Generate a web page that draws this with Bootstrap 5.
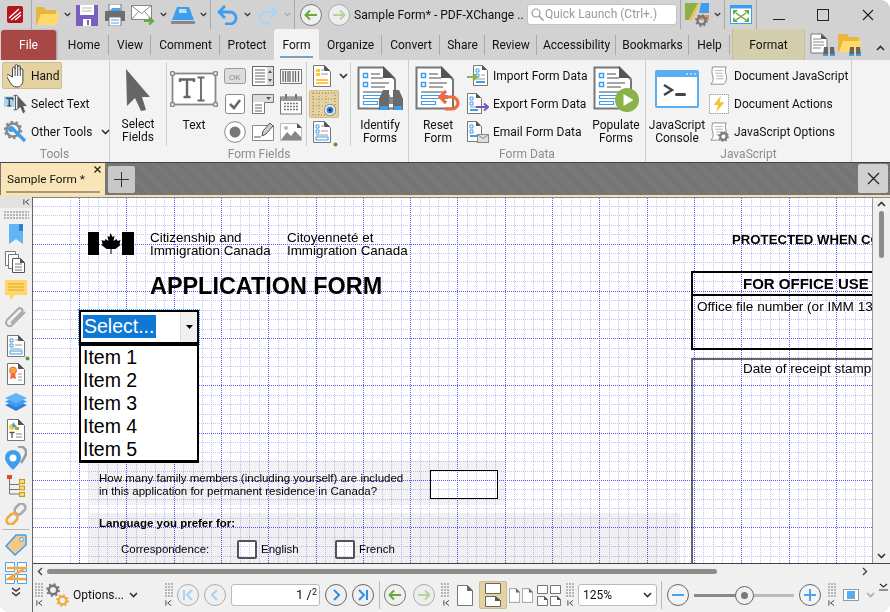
<!DOCTYPE html>
<html lang="en"><head><meta charset="utf-8"><title>Sample Form</title>
<link href="https://cdn.jsdelivr.net/npm/bootstrap@5.3.0/dist/css/bootstrap.min.css" rel="stylesheet">
<style>
html,body{margin:0;width:890px;height:612px;overflow:hidden;background:#fff}
body{font:12px/13px Roboto,sans-serif;color:#111}
svg{flex:none;display:block}
.win{width:890px;height:612px;background:#d2d2d2;border-radius:0 9px 9px 9px;overflow:hidden}
.titlebar{height:29px}
.vs{width:1px;height:29px;background:#a9a9a9;flex:none}
.ml2{margin-left:2px}.ml3{margin-left:3px}.ml4{margin-left:4px}.ml5{margin-left:5px}.ml6{margin-left:6px}.ml7{margin-left:7px}.ml8{margin-left:8px}.ml13{margin-left:13px}.ml16{margin-left:16px}.ml27{margin-left:27px}.ml32{margin-left:32px}.ml33{margin-left:33px}
.dtitle{width:171px;font-size:12.1px;white-space:nowrap;overflow:hidden;padding-top:1px}
.quick{width:150px;height:21px;background:#fff;border:1px solid #c4c4c4;border-radius:3px;color:#999;padding:0 3px;gap:1px}
.tabs{height:31px;flex-wrap:nowrap;padding-left:1px}
.tabs .nav-link{padding:0;height:31px;color:#111;font-size:12px;line-height:32px;text-align:center;flex:none;background:linear-gradient(#aaa,#aaa) right 6px/1px 20px no-repeat;border-radius:0}
.tabs .t-file{width:55px;margin-right:3px;margin-top:1px;height:30px;line-height:30px;color:#fff;background:#a94646;border-radius:3px 3px 0 0;box-shadow:1px 0 2px #999}
.tabs .t-active{width:45px;background:#f3f3f3;border-radius:3px 3px 0 0;position:relative}
.tabs .t-active::after{content:"";position:absolute;left:6px;right:6px;bottom:2px;height:2px;background:#7ba0bd}
.tabs .t-plain{background:none}
.tabs .t-format{width:73px;margin-left:2px;background:#d3ceae;border-left:1px solid #c9bf8e;border-right:1px solid #c9bf8e}
.w50{width:50px}.w42{width:42px}.w69{width:69px}.w54{width:54px}.w63{width:63px}.w58{width:58px}.w45{width:45px}.w52{width:52px}.w79{width:79px}.w73{width:73px}.w41{width:41px}
.ribbon{height:103px;background:#f3f3f3;border-bottom:1px solid #444}
.group{border-right:1px solid #cfcfcf;height:102px}
.g-tools{width:110px}.g-fields{width:299px}.g-data{width:237px}.g-js{width:206px}
.cols{height:88px}
.glabel{height:14px;line-height:13px;text-align:center;color:#8c8c8c}
.sm{height:28px;display:flex;align-items:center;white-space:nowrap}
.sm>span{padding-top:1px}
.hand{height:27px;width:60px;margin:0 0 1px 2px;background:#e4d2a0;border:1px solid #cdbc8c;border-radius:2px;padding:0 0 0 4px}
.tools{padding:2px 0 0 0}
.toolrow{padding-left:4px;gap:4px}
.lg{display:flex;flex-direction:column;align-items:center;text-align:center;flex:none;height:88px}
.lg>span{margin-top:1px}
.lgicon{height:58px;display:flex;align-items:center;justify-content:center}
.isep{border-right:1px solid #cfcfcf;height:84px;margin-top:2px;flex:none}
.isep.lg .lgicon{height:55px}
.l-sel{width:57px}.l-text{width:54px}.l-id{width:58px}.l-pop{width:52px}.l-con{width:62px}
.sgrid{display:grid;grid-template-columns:repeat(3,28px);grid-auto-rows:28px;place-items:center;padding-top:0;width:86px;height:84px}
.c44{width:44px}
.c44 .sm{justify-content:center;width:30px;position:relative}
.tan{width:28px;height:28px;background:#e4d2a0;border:1px solid #cdbc8c;border-radius:2px;margin-left:2px}
.chevx{position:absolute;left:32px;top:11px}
.dot2{position:absolute;left:26px;top:24px}
.dot1{position:absolute;right:2px;top:24px}
.rows{padding-top:2px;width:123px}
.rows .sm{gap:4px}
.rows2{padding-top:2px;padding-left:1px}
.rows2 .sm{gap:5px}
.doctabs{height:32px;background:#767676;background-image:repeating-linear-gradient(45deg,#7c7c7c 0 1px,#717171 1px 2px)}
.dtab{width:104px;margin-left:1px;background:#f9e5b8;position:relative;padding:10px 0 0 6px;white-space:nowrap;font-size:11.8px}
.dtab::after{content:"";position:absolute;left:5px;right:5px;bottom:2px;height:2px;background:#a89a7a}
.dx{position:absolute;right:4px;top:3px}
.plus{width:27px;height:27px;margin:3px 0 0 3px;background:#c8c8c8;border-radius:2px}
.closeb{width:30px;height:29px;margin:1px 2px 0 auto;background:#d0d0d0;border-radius:2px}
.lower{height:417px;border-top:2px solid #f3e0b6;background:#f0f0f0}
.side{width:33px;height:415px;border-right:1px solid #666;background:#f0f0f0;position:relative}
.side-col{width:32px;align-items:center}
.sidetop{height:11px;align-self:stretch;background:#e2e2e2;display:flex;justify-content:flex-end;padding:1px 2px 0 0}
.s28{height:28px;display:flex;align-items:center;justify-content:center;position:relative;width:32px;flex:none}
.grip{width:25px;height:8px;margin:3px 0 1px;background-image:radial-gradient(circle at 1px 1px,#b5b5b5 1px,transparent 1px);background-size:3px 3px}
.sepline{height:1px;width:28px;background:#bbb;margin:1px 0;flex:none}
.pagewrap{height:367px;width:857px;border-top:1px solid #888;border-bottom:1px solid #444}
.page{width:840px;height:365px;background:#fff;position:relative;overflow:hidden;font-family:"Liberation Sans",Arial,sans-serif;color:#000;border-right:1px solid #999}
.gridov{position:absolute;left:0;top:0;mix-blend-mode:multiply;z-index:2;pointer-events:none}
.vbar{width:17px;height:365px;background:#f0f0f0;padding-top:3px;align-items:center}
.vthumb{width:5px;height:47px;background:#8c8c8c;border-radius:3px;margin-top:4px}
.pl{width:658px;flex:none}
.pr{width:182px;flex:none}
.logo{margin:34px 0 0 55px;height:26px}
.cit{font-size:13.4px;line-height:13px;white-space:nowrap;margin-top:-1px}
.cit1{margin-left:16px;width:137px}
.h-app{font-weight:700;font-size:23.4px;line-height:28px;margin:14px 0 0 117px;white-space:nowrap}
.combo{width:120px;height:34px;margin:10px 0 0 46px;background:#fff;border:2px solid #000;outline:1px dotted #39f;padding:3px 0 0 2px;position:relative;z-index:3;font-size:19.5px;line-height:23px}
.sel{display:inline-block;width:73px;background:#0f78d4;color:#fff;padding-left:1px;height:23px;white-space:nowrap}
.cbtn{position:absolute;right:0;top:0;width:17px;height:30px;background:#f0f0f0;border-left:1px solid #ddd;display:flex;align-items:center;justify-content:center}
.items{width:120px;margin-left:46px;border:2px solid #000;border-width:2px 2px 3px 2px;position:relative;z-index:3;background:#fff;border-radius:0;height:119px}
.items .list-group-item{border:0;padding:0 0 0 2px;font-size:19.5px;line-height:23px;height:23px;color:#000;background:none}
.fam{margin:-2px 0 0 56px;width:416px;height:44px;background:#f2f2f2;padding:11px 0 0 10px;font-size:11.5px;line-height:13px;white-space:nowrap;justify-content:space-between}
.fambox{width:68px;height:29px;background:#fff;border:1px solid #000;margin:-2px 7px 0 0}
.lang{margin:8px 0 0 56px;width:591px;height:60px;background:#f0f0f0;padding:4px 0 0 10px;font-size:11.5px;line-height:13px;white-space:nowrap}
.lang b{display:block}
.chkrow{margin:10px 0 0 22px;align-items:center}
.chk.form-check-input{width:20px;height:19px;margin:0;border:2px solid #555;border-radius:2px;background:#fff}
.corr{width:116px}
.chk.fr{margin-left:37px}
.pt4{margin-left:4px}
.w37{width:37px}
.prot{font-weight:700;font-size:13.2px;line-height:14px;margin:35px 0 0 41px;white-space:nowrap}
.office{margin-top:24px;height:79px;border:2px solid #000;border-right:0;width:182px;overflow:hidden}
.ofh{height:23px;border-bottom:2px solid #000;font-weight:700;font-size:15px;line-height:22px;padding-left:50px;white-space:nowrap}
.ofb{font-size:13.6px;line-height:16px;padding:3px 0 0 4px;white-space:nowrap}
.recv{margin-top:8px;height:220px;border:2px solid #666;border-right:0;border-bottom:0;font-size:13.5px;line-height:16px;padding:1px 0 0 50px;white-space:nowrap;overflow:hidden}
.hs{height:15px;background:#f0f0f0;padding-left:4px;width:857px}
.hthumb{width:670px;height:5px;background:#8c8c8c;border-radius:3px;margin-left:4px}
.hsr{margin-left:145px}
.status{height:32px;width:857px;background:#f0f0f0;position:relative}
.gripb{width:8px;height:15px;background-image:radial-gradient(circle at 1px 1px,#b5b5b5 1px,transparent 1px);background-size:3px 3px;margin-top:-10px;flex:none}
.pgin{width:89px;height:22px;background:#fff;border:1px solid #bbb;border-radius:3px;text-align:right;padding:3px 2px 0 0;font-size:13px;flex:none}
.pgin sup{font-size:9px;top:-4px}
.seltan{width:28px;height:28px;background:#e4d2a0;border:1px solid #cdbc8c;border-radius:2px;flex:none}
.zoomsel{width:79px;height:22px;background:#fff;border:1px solid #bbb;border-radius:3px;padding:3px 4px;justify-content:space-between;flex:none}
.vsb{width:1px;height:28px;background:#bbb;flex:none}
.slider{width:100px;height:3px;background:linear-gradient(90deg,#888 43%,#bbb 43%);position:relative;flex:none}
.thumb{position:absolute;left:41px;top:-8px}
.k{position:absolute;top:20px}
.k1{left:3px}.k2{left:132px}.k3{left:410px}.k4{left:534px}.k5{left:795px}
.optx{width:51px;flex:none;white-space:nowrap;padding-top:1px}
</style></head><body>
<svg width="0" height="0" class="position-absolute"><defs>
<symbol id="chev" viewBox="0 0 9 6"><path d="M1 1l3.500 3.500L8 1" fill="none" stroke="#333" stroke-width="1.600"/></symbol>
<symbol id="chevg" viewBox="0 0 9 6"><path d="M1 1l3.500 3.500L8 1" fill="none" stroke="#aaa" stroke-width="1.600"/></symbol>
<symbol id="k" viewBox="0 0 8 8"><path d="M1 1v6" stroke="#333"/><path d="M7 1L3 4l4 3" fill="none" stroke="#333"/></symbol>
<symbol id="app" viewBox="0 0 16 17"><rect width="16" height="17" rx="2" fill="#b3171b"/><path d="M2 12L12 3M4 14L14 6M8 14l6-5" stroke="#fff" stroke-width="1.300"/></symbol>
<symbol id="folder" viewBox="0 0 24 20"><path d="M0 2h8l2 3h10v4H5L1 20H0z" fill="#e9b53c"/><path d="M5 9h19l-4 11H1z" fill="#ffd96a"/></symbol>
<symbol id="save" viewBox="0 0 22 22"><path d="M0 1h22v21H0z" fill="#7b5fc0"/><path d="M4 1h14v10H4z" fill="#fff"/><path d="M6 4h10M6 7h10" stroke="#bbb"/><path d="M7 15h8v7H7z" fill="#fff"/><path d="M11 16h2v5h-2z" fill="#7b5fc0"/></symbol>
<symbol id="print" viewBox="0 0 22 22"><path d="M5 0h12v7H5z" fill="#fff" stroke="#777"/><path d="M1 7h20v10H1z" fill="#6e6e6e"/><path d="M6 7h12l-2-3H8z" fill="#4aa3ee"/><path d="M5 13h12v9H5z" fill="#fff" stroke="#777"/><path d="M7 16h8M7 19h8" stroke="#4aa3ee"/></symbol>
<symbol id="mail" viewBox="0 0 24 20"><path d="M.5.500h20v14H.5z" fill="#fff" stroke="#888"/><path d="M.5.500l10 8 10-8M.5 14.500l7-8M20.500 14.500l-7-8" fill="none" stroke="#888"/><path d="M13 16h8M18 12.500l4 3.500-4 3.500" fill="none" stroke="#6aa83c" stroke-width="2.200"/></symbol>
<symbol id="stamp" viewBox="0 0 24 18"><path d="M6 1h12l5 13H1z" fill="#3d9dee"/><path d="M8 3h7l1 4H8z" fill="#b7defb"/><path d="M0 15h24v3H0z" fill="#888"/></symbol>
<symbol id="undo" viewBox="0 0 21 20"><path d="M8 1L2 7l6 6M2 7h11a6 6 0 0 1 0 12H8" fill="none" stroke="#3d9dee" stroke-width="2.800"/></symbol>
<symbol id="redo" viewBox="0 0 21 20"><path d="M13 1l6 6-6 6M19 7H8a6 6 0 0 0 0 12h5" fill="none" stroke="#abd5f5" stroke-width="2.800"/></symbol>
<symbol id="back" viewBox="0 0 22 22"><circle cx="11" cy="11" r="10.500" fill="#f0f0f0" stroke="#777"/><path d="M17 11H6M10 6.500L5.500 11l4.500 4.500" fill="none" stroke="#6aa83c" stroke-width="2"/></symbol>
<symbol id="fwd" viewBox="0 0 22 22"><circle cx="11" cy="11" r="10.500" fill="#eee" stroke="#aaa"/><path d="M5 11h11M12 6.500l4.500 4.500-4.500 4.500" fill="none" stroke="#b5d39b" stroke-width="2"/></symbol>
<symbol id="search" viewBox="0 0 13 13"><circle cx="5" cy="5" r="4" fill="none" stroke="#999" stroke-width="1.200"/><path d="M8 8l4.500 4.500" stroke="#999" stroke-width="1.500"/></symbol>
<symbol id="gear" viewBox="0 0 14 14"><circle cx="7" cy="7" r="4.200" fill="none" stroke="#777" stroke-width="2.500"/><circle cx="7" cy="7" r="5.800" fill="none" stroke="#777" stroke-width="2.200" stroke-dasharray="2 2.550"/></symbol>
<symbol id="gearo" viewBox="0 0 14 14"><circle cx="7" cy="7" r="4.200" fill="none" stroke="#f3a73d" stroke-width="2.500"/><circle cx="7" cy="7" r="5.800" fill="none" stroke="#f3a73d" stroke-width="2.200" stroke-dasharray="2 2.550"/></symbol>
<symbol id="theme" viewBox="0 0 24 24"><path d="M0 0h13L4 17H0z" fill="#8ab24a"/><path d="M13 0h2L7 17H4z" fill="#f2c342"/><path d="M16 0h8v10h-8l-2 0z" fill="#3d9dee"/><path d="M12 12h12v5H12z" fill="#e58f5b"/><use href="#gear" x="10" y="11" width="13" height="13"/></symbol>
<symbol id="full" viewBox="0 0 22 19"><rect x=".5" y=".5" width="21" height="18" fill="#fff" stroke="#3d9dee"/><rect x=".5" y=".5" width="21" height="3" fill="#3d9dee"/><path d="M3 5h5L3 10zM19 5v5l-5-5zM3 17v-5l5 5zM19 17h-5l5-5z" fill="#6aa83c"/><path d="M6 8l10 7M16 8L6 15" stroke="#6aa83c" stroke-width="1.500"/></symbol>
<symbol id="docfind" viewBox="0 0 26 24"><path d="M1 1h11l5 5v14H1z" fill="#fff" stroke="#777"/><path d="M3 6h8M3 9h11M3 12h11M3 15h8" stroke="#888"/><path d="M11 1l6 5h-6z" fill="#555"/><path d="M14 14h4v9h-5zM20 14h4l1 9h-5z" fill="#666"/><path d="M13 21h5v2h-5zM20 21h5v2h-5z" fill="#3d9dee"/></symbol>
<symbol id="folderfind" viewBox="0 0 25 24"><path d="M0 1h9l2 3h10v4H5L1 19H0z" fill="#e9b53c"/><path d="M5 8h19l-4 11H1z" fill="#ffd96a"/><path d="M12 14h4v9h-5zM18 14h4l1 9h-5z" fill="#666"/><path d="M11 21h5v2h-5zM18 21h5v2h-5z" fill="#3d9dee"/></symbol>
<symbol id="hand" viewBox="0 0 20 25"><path d="M5.500 14V5.500a1.300 1.300 0 0 1 2.600 0V3a1.300 1.300 0 0 1 2.600 0v1a1.300 1.300 0 0 1 2.600 0v3a1.300 1.300 0 0 1 2.600 0v10c0 4-2 7-6 7s-5-2-7-5l-3-5c-1-2 1-3 2-2z" fill="#fff" stroke="#444"/><path d="M8.100 5v8M10.700 3v10M13.300 4v9" stroke="#444"/></symbol>
<symbol id="seltext" viewBox="0 0 24 22"><rect x="0" y="3" width="11" height="11" fill="#a6d4f7"/><path d="M2 5h7v2M5.500 5v8M3.500 13h4" fill="none" stroke="#444" stroke-width="1.400"/><path d="M12 2v15M10 2h4M10 17h4" stroke="#555"/><path d="M14 2l10 11-4 0 2 6-2 2-3-7-3 3z" fill="#5c5c5c"/></symbol>
<symbol id="tools" viewBox="0 0 23 23"><circle cx="9" cy="9" r="6.500" fill="none" stroke="#888" stroke-width="2.500"/><circle cx="9" cy="9" r="8.300" fill="none" stroke="#888" stroke-width="2" stroke-dasharray="2.500 2.700"/><path d="M8 7l13 13" stroke="#3d9dee" stroke-width="3.200"/><circle cx="7" cy="8" r="3" fill="#3d9dee"/></symbol>
<symbol id="cursor" viewBox="0 0 26 42"><path d="M1 0l24 28-8 0 4 13-5 1-6-13-8 8z" fill="#666"/></symbol>
<symbol id="bigtext" viewBox="0 0 48 36"><rect x="2.500" y="2.500" width="43" height="31" fill="#fff" stroke="#888" stroke-width="1.800"/><g fill="#fff" stroke="#888" stroke-width="1.500"><circle cx="2.500" cy="2.500" r="2"/><circle cx="45.500" cy="2.500" r="2"/><circle cx="2.500" cy="33.500" r="2"/><circle cx="45.500" cy="33.500" r="2"/></g><path d="M10 11V8.500h14V11M17 8.500V26M13.500 26h7" fill="none" stroke="#666" stroke-width="2.400"/><path d="M31 6.500v23M27.500 6.500h7M27.500 29.500h7" stroke="#666" stroke-width="1.800"/></symbol>
<symbol id="okb" viewBox="0 0 22 16"><rect x=".5" y=".5" width="21" height="15" rx="2" fill="#ddd" stroke="#999"/></symbol>
<symbol id="chk" viewBox="0 0 20 20"><rect x=".5" y=".5" width="19" height="19" rx="2" fill="#fff" stroke="#888"/><path d="M5 10l4 4 6-8" fill="none" stroke="#666" stroke-width="2.500"/></symbol>
<symbol id="radio" viewBox="0 0 22 22"><circle cx="11" cy="11" r="10.300" fill="#fff" stroke="#888"/><circle cx="11" cy="11" r="5.500" fill="#777"/></symbol>
<symbol id="spin" viewBox="0 0 22 20"><rect x=".5" y=".5" width="21" height="19" fill="#fff" stroke="#666"/><path d="M3 4h10M3 7h10M3 10h10M3 13h10M3 16h10" stroke="#666"/><rect x="15" y="1" width="6" height="18" fill="#ddd"/><path d="M18 4l-2 3h4zM18 16l-2-3h4z" fill="#555"/></symbol>
<symbol id="barcode" viewBox="0 0 22 15"><rect x=".5" y=".5" width="21" height="14" fill="#fff" stroke="#777"/><path d="M3 2v11M5.500 2v11M8 2v11M10 2v11M13 2v11M15.500 2v11M18.500 2v11" stroke="#666" stroke-width="1.300"/></symbol>
<symbol id="combo" viewBox="0 0 22 20"><path d="M.5.500h21v8h-9v11h-12z" fill="#fff" stroke="#777"/><rect x="1" y="1" width="20" height="7" fill="#ddd"/><path d="M14 3h5l-2.500 3z" fill="#555"/><path d="M3 11h7M3 14h7M3 17h7" stroke="#666"/></symbol>
<symbol id="cal" viewBox="0 0 22 21"><rect x=".5" y="3" width="21" height="17" fill="#fff" stroke="#777"/><rect x="1" y="3" width="20" height="4" fill="#999"/><path d="M6 0v5M16 0v5" stroke="#777" stroke-width="2"/><path d="M4 9.500h14M4 12.500h14M4 15.500h14" stroke="#777" stroke-width="1.600" stroke-dasharray="2 1"/></symbol>
<symbol id="sig" viewBox="0 0 22 20"><path d="M.5 3.500h21v15H.5z" fill="#fff" stroke="#888"/><path d="M2 15h7" stroke="#555"/><path d="M10 14l1-5 7-8 3 3-7 8z" fill="#ccc" stroke="#555"/></symbol>
<symbol id="img" viewBox="0 0 22 18"><path d="M.5.500h17l4 4v13H.5z" fill="#fff" stroke="#bbb"/><path d="M1 17l6-8 4 4 4-5 6 6v3z" fill="#888"/><circle cx="6" cy="5" r="2" fill="#bbb"/><path d="M17 0l5 5h-5z" fill="#555"/></symbol>
<symbol id="docy" viewBox="0 0 18 22"><path d="M.5.500h11l6 6v15H.5z" fill="#fff" stroke="#777"/><path d="M11 0l6 6h-6z" fill="#555"/><path d="M3 4h4v3H3zM3 8h4v3H3z" fill="#ffc83d"/><path d="M8 5h4M8 9h7" stroke="#999"/><rect x="3" y="14" width="12" height="2" fill="#ffc83d"/><rect x="3" y="17" width="12" height="2" fill="#ffc83d"/></symbol>
<symbol id="docb" viewBox="0 0 18 22"><path d="M.5.500h11l6 6v15H.5z" fill="#fff" stroke="#777"/><path d="M11 0l6 6h-6z" fill="#555"/><path d="M3 4h3v3H3zM3 9h3v3H3z" fill="#fff" stroke="#3d9dee"/><path d="M8 5h4M8 10h7M3 14h12" stroke="#999"/><rect x="3" y="16" width="12" height="3" fill="#fff" stroke="#3d9dee"/></symbol>
<symbol id="griddoc" viewBox="0 0 24 24"><path d="M1 1h22v22H1z" fill="none" stroke="#8a7a52" stroke-dasharray="1 2"/><path d="M7 1v22M14 1v22M1 7h22M1 14h22" stroke="#a2915f" stroke-dasharray="1 2"/><circle cx="18" cy="18" r="5.500" fill="#fff" stroke="#888"/><circle cx="18" cy="18" r="3.500" fill="#2f7fd0"/><circle cx="18" cy="18" r="1.300" fill="#222"/></symbol>
<symbol id="bigdoc" viewBox="0 0 46 46"><path d="M1.500 1.500H26l12 12v29H1.500z" fill="#fff" stroke="#777" stroke-width="2"/><path d="M26 0l12 12H26z" fill="#555"/><path d="M6.500 7.500h4v4h-4zM6.500 16.500h4v4h-4z" fill="#fff" stroke="#3d9dee" stroke-width="1.500"/><path d="M14 8h9M14 12h12M14 17h18M14 21h14M6 26h22" stroke="#888" stroke-width="1.300"/><path d="M6.500 29.500h26v3h-26zM6.500 35.500h14v3h-14z" fill="#fff" stroke="#3d9dee" stroke-width="1.200"/></symbol>
<symbol id="binoc" viewBox="0 0 24 24"><path d="M4 2h6v20H0V11zM14 2h6l4 9v11H14z" fill="#6a6a6a"/><path d="M10 9h4v7h-4z" fill="#888"/><path d="M1 18h8v4H1zM15 18h8v4h-8z" fill="#3d9dee"/></symbol>
<symbol id="rarrow" viewBox="0 0 24 24"><path d="M9 3L3 9l6 6M3 9h12a6 6 0 0 1 0 12H8" fill="none" stroke="#f06a3c" stroke-width="3.200"/></symbol>
<symbol id="play" viewBox="0 0 24 24"><circle cx="12" cy="12" r="12" fill="#8ab24a"/><path d="M8.500 6l10 6-10 6z" fill="#fff"/></symbol>
<symbol id="imp" viewBox="0 0 22 22"><path d="M6.500.500h9l5 5v15h-14z" fill="#fff" stroke="#777"/><path d="M15 0l5 5h-5z" fill="#555"/><path d="M9 4h3v3H9zM9 9h3v3H9z" fill="#fff" stroke="#3d9dee"/><path d="M14 10h4M9 14h9" stroke="#999"/><rect x="9" y="16" width="9" height="2" fill="#3d9dee"/><path d="M0 12h9M6 8.500l4 3.500-4 3.500" fill="none" stroke="#8ab24a" stroke-width="2"/></symbol>
<symbol id="exp" viewBox="0 0 22 22"><path d="M.5.500h9l5 5v15H.5z" fill="#fff" stroke="#777"/><path d="M9 0l5 5H9z" fill="#555"/><path d="M3 4h3v3H3zM3 9h3v3H3z" fill="#fff" stroke="#3d9dee"/><path d="M3 14h6" stroke="#999"/><rect x="3" y="16" width="8" height="2" fill="#3d9dee"/><path d="M9 14h11M17 10.500l4 3.500-4 3.500" fill="none" stroke="#7a55c0" stroke-width="2"/></symbol>
<symbol id="eml" viewBox="0 0 22 22"><path d="M.5.500h9l5 5v15H.5z" fill="#fff" stroke="#777"/><path d="M9 0l5 5H9z" fill="#555"/><path d="M3 4h3v3H3zM3 9h3v3H3z" fill="#fff" stroke="#3d9dee"/><rect x="3" y="14" width="8" height="2" fill="#3d9dee"/><rect x="10.500" y="13.500" width="11" height="8" fill="#ddd" stroke="#888"/><path d="M10.500 13.500l5.500 4 5.500-4" fill="none" stroke="#888"/></symbol>
<symbol id="con" viewBox="0 0 44 38"><rect x="1" y="1" width="42" height="36" rx="1" fill="#fff" stroke="#5aaef0" stroke-width="2"/><rect x="1" y="1" width="42" height="6" fill="#5aaef0"/><path d="M31 4h2M35 4h2M39 4h2" stroke="#fff"/><path d="M9 15l8 5-8 5" fill="none" stroke="#444" stroke-width="2.400"/><rect x="20" y="23" width="11" height="3" rx="1.500" fill="#444"/></symbol>
<symbol id="scroll" viewBox="0 0 22 22"><path d="M4 1h15c-2 3-1 6 0 9s0 8-3 10H2c3-3 3-6 2-9S3 4 4 1z" fill="#fff" stroke="#888"/><path d="M7 5h8M7 8h8M8 11h8M8 14h8" stroke="#aaa"/></symbol>
<symbol id="docact" viewBox="0 0 22 22"><rect x=".5" y=".5" width="21" height="21" fill="#fff" stroke="#777" stroke-dasharray="1 1"/><path d="M13 2L5 12h5l-2 8 9-11h-5z" fill="#f5c33b"/></symbol>
<symbol id="jsopt" viewBox="0 0 22 22"><use href="#scroll"/><use href="#gear" x="10" y="10" width="12" height="12"/></symbol>
<symbol id="bm" viewBox="0 0 14 20"><path d="M0 0h14v20l-7-5-7 5z" fill="#63b4f5"/><path d="M10 0h4v7h-4z" fill="#2f7fd0"/></symbol>
<symbol id="pages" viewBox="0 0 22 22"><path d="M.5.500h10v14H.5z" fill="#fff" stroke="#777"/><path d="M3.500 3.500h10v14h-10z" fill="#fff" stroke="#777"/><path d="M7.500 7.500h8l4 4v10h-12z" fill="#fff" stroke="#555"/><path d="M15 7l5 5h-5z" fill="#555"/><path d="M10 13h7M10 16h7M10 19h7" stroke="#777"/></symbol>
<symbol id="note" viewBox="0 0 22 21"><path d="M1 0h20a1 1 0 0 1 1 1v13a1 1 0 0 1-1 1H10l-5 6v-6H1a1 1 0 0 1-1-1V1a1 1 0 0 1 1-1z" fill="#ffd768"/><path d="M3 4h16M3 7h16M3 10h16" stroke="#e0a52d"/></symbol>
<symbol id="clip" viewBox="0 0 24 24"><path d="M21 6L8 19c-3 3-8-1-5-5L14 3c2-2 6 0 4 3L7 17" fill="none" stroke="#aaa" stroke-width="2"/></symbol>
<symbol id="cert" viewBox="0 0 18 22"><path d="M.5.500h11l6 6v15H.5z" fill="#fff" stroke="#777"/><path d="M11 0l6 6h-6z" fill="#555"/><path d="M4 10l-1 6 3-1 3 1-1-6z" fill="#f06a3c"/><circle cx="6" cy="7.500" r="3.500" fill="#f3a73d" stroke="#f06a3c"/><path d="M11 11h4M11 14h4M11 17h4" stroke="#999"/></symbol>
<symbol id="layers" viewBox="0 0 22 18"><path d="M11 8L22 12l-11 6L0 12z" fill="#2f7fd0"/><path d="M11 4l11 4.500-11 6L0 8.500z" fill="#3d9dee"/><path d="M11 0l11 5-11 5.500L0 5z" fill="#63b4f5"/></symbol>
<symbol id="docs" viewBox="0 0 18 22"><path d="M.5.500h11l6 6v15H.5z" fill="#fff" stroke="#777"/><path d="M11 0l6 6h-6z" fill="#555"/><circle cx="5" cy="8" r="3" fill="#ffc83d"/><path d="M6 3l4 5H5z" fill="#3d9dee"/><path d="M8 8h4v3H8z" fill="#8ab24a"/><path d="M2.500 13.500h5M5 13.500V19" stroke="#555" stroke-width="1.300"/><path d="M9 15h6M9 18h6" stroke="#888"/></symbol>
<symbol id="loc" viewBox="0 0 22 24"><path d="M13 1c4-2 9 2 8 7-1 3-3 6-5 9" fill="none" stroke="#999" stroke-width="2.500"/><path d="M8 4a8 8 0 0 1 8 8c0 4-5 9-8 12-3-3-8-8-8-12a8 8 0 0 1 8-8z" fill="#3d9dee"/><circle cx="8" cy="12" r="3.500" fill="#fff"/></symbol>
<symbol id="tree" viewBox="0 0 18 22"><rect width="5" height="4" fill="#e04c30"/><path d="M2.500 4v15h10M2.500 9.500h10M2.500 14.500h10" fill="none" stroke="#777"/><g fill="#ffd768" stroke="#c09a20"><rect x="12.500" y="4.500" width="5" height="4"/><rect x="12.500" y="11" width="5" height="4"/><rect x="12.500" y="17.500" width="5" height="4"/></g></symbol>
<symbol id="link" viewBox="0 0 22 22"><rect x="9" y="2" width="12" height="8" rx="4" transform="rotate(-45 15 6)" fill="none" stroke="#aaa" stroke-width="2.600"/><rect x="1" y="12" width="12" height="8" rx="4" transform="rotate(-45 7 16)" fill="none" stroke="#f3a73d" stroke-width="2.600"/></symbol>
<symbol id="tag" viewBox="0 0 22 22"><path d="M11 1h9a1 1 0 0 1 1 1v9L10 21 1 12z" fill="#f5c88a" stroke="#3d9dee" stroke-width="1.500"/><circle cx="16.500" cy="5.500" r="1.800" fill="#fff" stroke="#3d9dee"/></symbol>
<symbol id="zz" viewBox="0 0 22 22"><path d="M.5.500h9v9h-9zM12.500.500h9v9h-9zM.5 12.500h9v9h-9zM12.500 12.500h9v9h-9z" fill="#fff" stroke="#4aa3ee"/><path d="M2 6h18L3 17h18" fill="none" stroke="#f3a73d" stroke-width="2.400"/></symbol>
<symbol id="dchev" viewBox="0 0 10 10"><path d="M1 1l4 3 4-3M1 5.500l4 3 4-3" fill="none" stroke="#333" stroke-width="1.400"/></symbol>
<symbol id="pfirst" viewBox="0 0 22 22"><circle cx="11" cy="11" r="10.500" fill="#f0f0f0" stroke="#aaa"/><path d="M7 6v10M15 6l-5 5 5 5" fill="none" stroke="#a9d3f3" stroke-width="2"/></symbol>
<symbol id="pprev" viewBox="0 0 22 22"><circle cx="11" cy="11" r="10.500" fill="#f0f0f0" stroke="#aaa"/><path d="M13 6l-5 5 5 5" fill="none" stroke="#a9d3f3" stroke-width="2"/></symbol>
<symbol id="pnext" viewBox="0 0 22 22"><circle cx="11" cy="11" r="10.500" fill="#f0f0f0" stroke="#666"/><path d="M9 6l5 5-5 5" fill="none" stroke="#2f8fe6" stroke-width="2"/></symbol>
<symbol id="plast" viewBox="0 0 22 22"><circle cx="11" cy="11" r="10.500" fill="#f0f0f0" stroke="#666"/><path d="M7 6l5 5-5 5M15 6v10" fill="none" stroke="#2f8fe6" stroke-width="2"/></symbol>
<symbol id="pg1" viewBox="0 0 16 21"><path d="M.5.500h10l5 5v15H.5z" fill="#fff" stroke="#777"/><path d="M10 0l6 6h-6z" fill="#666"/></symbol>
<symbol id="pgc" viewBox="0 0 16 24"><path d="M.5.500h15v10H.5z" fill="#fff" stroke="#666"/><path d="M.5 13.500h10l5 4v6H.5z" fill="#fff" stroke="#666"/><path d="M10 13l6 5h-6z" fill="#555"/></symbol>
<symbol id="pg2" viewBox="0 0 24 15"><use href="#pg1" width="11" height="15"/><use href="#pg1" x="13" width="11" height="15"/></symbol>
<symbol id="pg4" viewBox="0 0 24 21"><path d="M.5.500h10v8H.5zM13.500.500h10v8h-10z" fill="#fff" stroke="#777"/><path d="M.5 11.500h7l3 3v6H.5zM13.500 11.500h7l3 3v6h-10z" fill="#fff" stroke="#777"/><path d="M7 11l4 4H7zM20 11l4 4h-4z" fill="#555"/></symbol>
<symbol id="zm" viewBox="0 0 22 22"><circle cx="11" cy="11" r="10.500" fill="#f4f4f4" stroke="#666"/><path d="M5 11h12" stroke="#4aa3ee" stroke-width="2"/></symbol>
<symbol id="zp" viewBox="0 0 22 22"><circle cx="11" cy="11" r="10.500" fill="#f4f4f4" stroke="#666"/><path d="M5 11h12M11 5v12" stroke="#4aa3ee" stroke-width="2"/></symbol>
<symbol id="thumb" viewBox="0 0 19 19"><circle cx="9.500" cy="9.500" r="9" fill="#f0f0f0" stroke="#666"/><circle cx="9.500" cy="9.500" r="3.500" fill="#777"/></symbol>
<symbol id="fit" viewBox="0 0 16 12"><rect x=".5" y=".5" width="15" height="11" fill="#fff" stroke="#999"/><rect x="4" y="2" width="8" height="8" fill="#5aaef0"/></symbol>
</defs></svg>

<div class="win d-flex flex-column">
 <div class="titlebar d-flex align-items-center">
  <svg class="ml7" width="16" height="17"><use href="#app"/></svg><span class="vs ml8"></span>
  <svg class="ml4" width="24" height="20"><use href="#folder"/></svg><svg class="ml4" width="7" height="5"><use href="#chev"/></svg>
  <svg class="ml5" width="22" height="22"><use href="#save"/></svg><svg class="ml6" width="22" height="22"><use href="#print"/></svg>
  <svg class="ml5" width="24" height="20"><use href="#mail"/></svg><svg class="ml5" width="7" height="5"><use href="#chev"/></svg>
  <svg class="ml4" width="24" height="18"><use href="#stamp"/></svg><svg class="ml5" width="7" height="5"><use href="#chev"/></svg><span class="vs ml3"></span>
  <svg class="ml6" width="21" height="20"><use href="#undo"/></svg><svg class="ml6" width="7" height="5"><use href="#chev"/></svg>
  <svg class="ml7" width="20" height="20"><use href="#redo"/></svg><svg class="ml6" width="7" height="5"><use href="#chevg"/></svg><span class="vs ml3"></span>
  <svg class="ml5" width="22" height="22"><use href="#back"/></svg><svg class="ml6" width="22" height="22"><use href="#fwd"/></svg>
  <span class="dtitle ml4">Sample Form* - PDF-XChange ..</span>
  <div class="quick ml2 d-flex align-items-center"><svg width="13" height="13"><use href="#search"/></svg><span>Quick Launch (Ctrl+.)</span></div>
  <span class="vs ml3"></span><svg class="ml4" width="24" height="24"><use href="#theme"/></svg><svg class="ml5" width="7" height="5"><use href="#chev"/></svg><span class="vs ml3"></span>
  <svg class="ml5" width="22" height="19"><use href="#full"/></svg><span class="vs ml4"></span>
  <svg class="ml16" width="12" height="12"><path d="M0 10.500h12" stroke="#222" stroke-width="1.200"/></svg>
  <svg class="ml32" width="12" height="12"><rect x=".5" y=".5" width="11" height="11" fill="none" stroke="#222"/></svg>
  <svg class="ml33" width="12" height="12"><path d="M1 1l10 10M11 1L1 11" stroke="#222" stroke-width="1.100"/></svg>
 </div>

 <nav class="nav tabs align-items-start">
  <a class="nav-link t-file" href="#">File</a>
  <a class="nav-link w50" href="#">Home</a><a class="nav-link w42" href="#">View</a><a class="nav-link w69" href="#">Comment</a><a class="nav-link w54 t-plain" href="#">Protect</a>
  <a class="nav-link t-active" href="#">Form</a>
  <a class="nav-link w63" href="#">Organize</a><a class="nav-link w58" href="#">Convert</a><a class="nav-link w45" href="#">Share</a><a class="nav-link w52" href="#">Review</a><a class="nav-link w79" href="#">Accessibility</a><a class="nav-link w73" href="#">Bookmarks</a><a class="nav-link w41" href="#">Help</a>
  <a class="nav-link t-format" href="#">Format</a>
  <svg class="ml5 mt-1" width="26" height="24"><use href="#docfind"/></svg><svg class="ml2 mt-1" width="25" height="24"><use href="#folderfind"/></svg>
  <svg class="ml13 mt-3" width="9" height="6"><g transform="rotate(180 4.500 3)"><use href="#chev"/></g></svg>
 </nav>

 <div class="ribbon d-flex">
  <section class="group g-tools">
   <div class="cols tools">
    <div class="sm hand gap-1"><svg width="20" height="25"><use href="#hand"/></svg><span>Hand</span></div>
    <div class="sm toolrow"><svg width="23" height="22" viewBox="0 0 24 22"><use href="#seltext"/></svg><span>Select Text</span></div>
    <div class="sm toolrow"><svg width="23" height="23"><use href="#tools"/></svg><span>Other Tools</span><svg class="ml5" width="9" height="6"><use href="#chev"/></svg></div>
   </div>
   <div class="glabel">Tools</div>
  </section>
  <section class="group g-fields">
   <div class="cols d-flex">
    <div class="lg l-sel isep"><div class="lgicon"><svg width="26" height="42"><use href="#cursor"/></svg></div><span>Select<br>Fields</span></div>
    <div class="lg l-text"><div class="lgicon"><svg width="48" height="36"><use href="#bigtext"/></svg></div><span>Text</span></div>
    <div class="sgrid isep">
     <svg width="22" height="16" viewBox="0 0 22 16"><use href="#okb"/><text x="5" y="11.500" font-size="8" fill="#888" font-family="Liberation Sans">OK</text></svg>
     <svg width="22" height="20"><use href="#spin"/></svg><svg width="22" height="15"><use href="#barcode"/></svg>
     <svg width="20" height="20"><use href="#chk"/></svg><svg width="22" height="20"><use href="#combo"/></svg><svg width="22" height="21"><use href="#cal"/></svg>
     <svg width="22" height="22"><use href="#radio"/></svg><svg width="22" height="20"><use href="#sig"/></svg><svg width="22" height="18"><use href="#img"/></svg>
    </div>
    <div class="c44 isep">
     <div class="sm"><svg width="18" height="22"><use href="#docy"/></svg><svg class="chevx" width="9" height="6"><use href="#chev"/></svg></div>
     <div class="sm tan d-flex align-items-center justify-content-center"><svg width="24" height="24"><use href="#griddoc"/></svg></div>
     <div class="sm"><svg width="18" height="22"><use href="#docb"/></svg><svg class="dot2" width="5" height="5"><circle cx="2.500" cy="2.500" r="2" fill="#4f9a2c"/></svg></div>
    </div>
    <div class="lg l-id"><div class="lgicon"><svg width="46" height="46" viewBox="0 0 46 46"><use href="#bigdoc" width="46" height="46"/><use href="#binoc" x="22" y="22" width="24" height="24"/></svg></div><span>Identify<br>Forms</span></div>
   </div>
   <div class="glabel">Form Fields</div>
  </section>
  <section class="group g-data">
   <div class="cols d-flex">
    <div class="lg l-id"><div class="lgicon"><svg width="46" height="46" viewBox="0 0 46 46"><use href="#bigdoc" width="46" height="46"/><use href="#rarrow" x="22" y="22" width="24" height="24"/></svg></div><span>Reset<br>Form</span></div>
    <div class="rows">
     <div class="sm"><svg width="22" height="22"><use href="#imp"/></svg><span>Import Form Data</span></div>
     <div class="sm"><svg width="22" height="22"><use href="#exp"/></svg><span>Export Form Data</span></div>
     <div class="sm"><svg width="22" height="22"><use href="#eml"/></svg><span>Email Form Data</span></div>
    </div>
    <div class="lg l-pop"><div class="lgicon"><svg width="46" height="46" viewBox="0 0 46 46"><use href="#bigdoc" width="46" height="46"/><use href="#play" x="22" y="22" width="24" height="24"/></svg></div><span>Populate<br>Forms</span></div>
   </div>
   <div class="glabel">Form Data</div>
  </section>
  <section class="group g-js">
   <div class="cols d-flex">
    <div class="lg l-con"><div class="lgicon"><svg width="44" height="38"><use href="#con"/></svg></div><span>JavaScript<br>Console</span></div>
    <div class="rows2">
     <div class="sm"><svg width="20" height="22" viewBox="0 0 22 22"><use href="#scroll"/></svg><span>Document JavaScript</span></div>
     <div class="sm"><svg width="20" height="22" viewBox="0 0 22 22"><use href="#docact"/></svg><span>Document Actions</span></div>
     <div class="sm"><svg width="20" height="22" viewBox="0 0 22 22"><use href="#jsopt"/></svg><span>JavaScript Options</span></div>
    </div>
   </div>
   <div class="glabel">JavaScript</div>
  </section>
 </div>

 <div class="doctabs d-flex">
  <div class="dtab">Sample Form *<svg class="dx" width="7" height="7"><path d="M.5.500l6 6M6.500.500l-6 6" stroke="#222" stroke-width="1.300"/></svg></div>
  <div class="plus d-flex align-items-center justify-content-center"><svg width="15" height="15"><path d="M7.500 0v15M0 7.500h15" stroke="#333"/></svg></div>
  <div class="closeb d-flex align-items-center justify-content-center"><svg width="13" height="13"><path d="M1 1l11 11M12 1L1 12" stroke="#222" stroke-width="1.200"/></svg></div>
 </div>

 <div class="lower d-flex">
  <aside class="side">
   <div class="side-col d-flex flex-column">
    <div class="sidetop"><svg width="7" height="8"><use href="#k"/></svg></div>
    <div class="grip"></div>
    <div class="s28"><svg width="14" height="20"><use href="#bm"/></svg></div>
    <div class="s28"><svg width="22" height="22"><use href="#pages"/></svg></div>
    <div class="s28"><svg width="22" height="21"><use href="#note"/></svg></div>
    <div class="s28"><svg width="24" height="24"><use href="#clip"/></svg></div>
    <div class="s28"><svg width="18" height="22"><use href="#docb"/></svg><svg class="dot1" width="5" height="5"><circle cx="2.500" cy="2.500" r="2" fill="#4f9a2c"/></svg></div>
    <div class="s28"><svg width="18" height="22"><use href="#cert"/></svg></div>
    <div class="s28"><svg width="22" height="18"><use href="#layers"/></svg></div>
    <div class="s28"><svg width="18" height="22"><use href="#docs"/></svg></div>
    <div class="s28"><svg width="22" height="24"><use href="#loc"/></svg></div>
    <div class="s28"><svg width="18" height="22"><use href="#tree"/></svg></div>
    <div class="s28"><svg width="22" height="22"><use href="#link"/></svg></div>
    <div class="sepline"></div>
    <div class="s28"><svg width="22" height="22"><use href="#tag"/></svg></div>
    <div class="s28"><svg width="22" height="22"><use href="#zz"/></svg></div>
    <div class="d-flex justify-content-center"><svg width="10" height="10"><use href="#dchev"/></svg></div>
   </div>
  </aside>
  <div class="d-flex flex-column">
   <div class="pagewrap d-flex">
    <main class="page d-flex">
     <svg class="gridov" width="840" height="365" shape-rendering="crispEdges"><path id="gmin" fill="none" stroke="#c4c4ff" stroke-dasharray="1 1"/><path id="gmaj" fill="none" stroke="#5c5cff" stroke-dasharray="1 1"/></svg>
     <div class="pl">
      <div class="logo d-flex">
       <svg width="46" height="23" viewBox="0 0 46 23"><path d="M0 0h11v23H0zM34 0h12v23H34z" fill="#000"/><path d="M22.500 1l2 4 2-1-1 5 3-2 1 2 3-1-1 4 1 1-5 4h-4v5h-1v-5h-4l-5-4 1-1-1-4 3 1 1-2 3 2-1-5 2 1z" fill="#000"/></svg>
       <div class="cit cit1">Citizenship and<br>Immigration Canada</div><div class="cit">Citoyenneté et<br>Immigration Canada</div>
      </div>
      <h1 class="h-app">APPLICATION FORM</h1>
      <div class="combo"><span class="sel">Select...</span><span class="cbtn"><svg width="7" height="4"><path d="M0 0h7L3.500 4z" fill="#000"/></svg></span></div>
      <ul class="list-group items"><li class="list-group-item">Item 1</li><li class="list-group-item">Item 2</li><li class="list-group-item">Item 3</li><li class="list-group-item">Item 4</li><li class="list-group-item">Item 5</li></ul>
      <div class="fam d-flex"><div>How many family members (including yourself) are included<br>in this application for permanent residence in Canada?</div><div class="fambox"></div></div>
      <div class="lang"><b>Language you prefer for:</b>
       <div class="chkrow d-flex"><span class="corr">Correspondence:</span><input class="form-check-input chk" type="checkbox" aria-label="English"><span class="pt4 w37">English</span><input class="form-check-input chk fr" type="checkbox" aria-label="French"><span class="pt4">French</span></div>
      </div>
     </div>
     <div class="pr">
      <div class="prot">PROTECTED WHEN COMPLETED</div>
      <div class="office"><div class="ofh">FOR OFFICE USE ONLY</div><div class="ofb">Office file number (or IMM 1344)</div></div>
      <div class="recv">Date of receipt stamp</div>
     </div>
    </main>
    <div class="vbar d-flex flex-column"><svg width="9" height="6"><g transform="rotate(180 4.500 3)"><use href="#chev"/></g></svg><div class="vthumb"></div><svg class="mt-auto mb-1" width="9" height="6"><use href="#chev"/></svg></div>
   </div>
   <div class="hs d-flex align-items-center"><svg width="6" height="9"><path d="M5 1L1.500 4.500 5 8" fill="none" stroke="#444" stroke-width="1.400"/></svg><div class="hthumb"></div><svg class="hsr" width="6" height="9"><path d="M1 1l3.500 3.500L1 8" fill="none" stroke="#444" stroke-width="1.400"/></svg></div>
   <div class="status d-flex align-items-center">
    <div class="gripb ml2"></div>
    <svg class="ml3" width="24" height="24" viewBox="0 0 24 24"><use href="#gear" width="14" height="14"/><use href="#gearo" x="10" y="11" width="13" height="13"/></svg>
    <span class="ml3 optx">Options...</span><svg class="ml5" width="9" height="6"><use href="#chev"/></svg>
    <div class="gripb ml27"></div>
    <svg class="ml4" width="22" height="22"><use href="#pfirst"/></svg><svg class="ml5" width="22" height="22"><use href="#pprev"/></svg>
    <div class="pgin ml5">1 /<sup>2</sup></div>
    <svg class="ml5" width="22" height="22"><use href="#pnext"/></svg><svg class="ml5" width="22" height="22"><use href="#plast"/></svg>
    <span class="vsb ml5"></span>
    <svg class="ml4" width="22" height="22"><use href="#back"/></svg><svg class="ml7" width="22" height="22"><use href="#fwd"/></svg>
    <div class="gripb ml6"></div>
    <svg class="ml8" width="16" height="21"><use href="#pg1"/></svg>
    <div class="seltan ml6 d-flex align-items-center justify-content-center"><svg width="16" height="24"><use href="#pgc"/></svg></div>
    <svg class="ml2" width="24" height="15"><use href="#pg2"/></svg><svg class="ml4" width="24" height="21"><use href="#pg4"/></svg>
    <div class="gripb ml5"></div>
    <div class="zoomsel ml4 d-flex align-items-center"><span>125%</span><svg width="9" height="6"><use href="#chev"/></svg></div>
    <span class="vsb ml4"></span>
    <svg class="ml5" width="22" height="22"><use href="#zm"/></svg>
    <div class="slider ml5"><svg class="thumb" width="19" height="19"><use href="#thumb"/></svg></div>
    <svg class="ml5" width="22" height="22"><use href="#zp"/></svg>
    <div class="gripb ml7"></div>
    <svg class="ml7" width="16" height="12"><use href="#fit"/></svg><svg class="ml7" width="9" height="6"><use href="#chevg"/></svg>
    <svg class="ml4 mb-3" width="9" height="8"><path d="M1 1l3.500 3L8 1" fill="none" stroke="#333" stroke-width="1.300"/><path d="M0 7h9" stroke="#333"/></svg>
    <svg class="k k1" width="7" height="8"><use href="#k"/></svg><svg class="k k2" width="7" height="8"><use href="#k"/></svg><svg class="k k3" width="7" height="8"><use href="#k"/></svg><svg class="k k4" width="7" height="8"><use href="#k"/></svg><svg class="k k5" width="7" height="8"><use href="#k"/></svg>
   </div>
  </div>
 </div>
</div>
<script src="https://cdn.jsdelivr.net/npm/bootstrap@5.3.0/dist/js/bootstrap.bundle.min.js"></script>
<script>
(function(){
 var W=840,H=365,P=47.3,mi='',ma='',i,v;
 for(i=-1;i<100;i++){v=Math.round(46+i*P/5);if(v<0||v>W)continue;if(((i%5)+5)%5==0)ma+='M'+(v+.5)+' 0V'+H;else mi+='M'+(v+.5)+' 0V'+H;}
 for(i=-5;i<50;i++){v=Math.round(45.5+i*P/5);if(v<0||v>H)continue;if(((i%5)+5)%5==0)ma+='M0 '+(v+.5)+'H'+W;else mi+='M0 '+(v+.5)+'H'+W;}
 document.getElementById('gmin').setAttribute('d',mi);
 document.getElementById('gmaj').setAttribute('d',ma);
})();
</script>
</body></html>
